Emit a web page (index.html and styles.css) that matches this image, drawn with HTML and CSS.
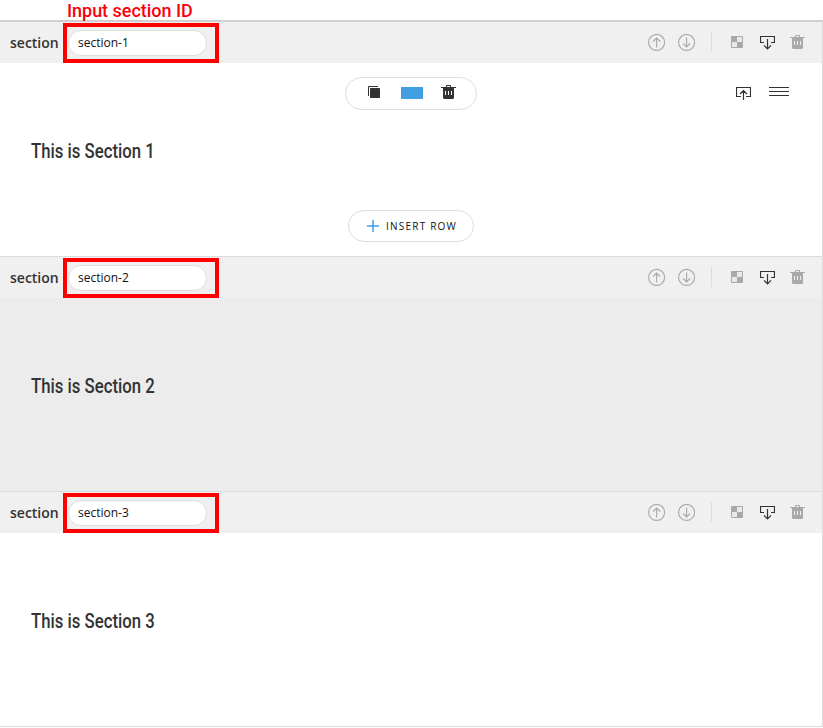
FILE: index.html
```html
<!DOCTYPE html>
<html lang="en">
<head>
<meta charset="utf-8">
<title>Section ID</title>
<link rel="stylesheet" href="styles.css">
</head>
<body>
<svg class="defs" width="0" height="0">
  <symbol id="up" viewBox="0 0 18 18"><g fill="none" stroke="currentColor" stroke-width="1.1"><circle cx="8.6" cy="9.4" r="8"/><path d="M8.6 14.5V5M5.1 8.5L8.6 5L12.1 8.5"/></g></symbol>
  <symbol id="down" viewBox="0 0 18 18"><g fill="none" stroke="currentColor" stroke-width="1.1"><circle cx="8.6" cy="9.4" r="8"/><path d="M8.6 4.5V14M5.1 10.5L8.6 14L12.1 10.5"/></g></symbol>
  <symbol id="checker" viewBox="0 0 12 12"><rect width="12" height="12" rx="1" fill="#a9a9a9"/><path d="M6 1H11V6H6ZM1 6H6V11H1Z" fill="#e9e9e9"/></symbol>
  <symbol id="insert" viewBox="0 0 15 14"><path d="M4 6.5H.5V.5H14.5V6.5H11M7.5 3V12.8M4 9.3L7.5 12.8L11 9.3" fill="none" stroke="currentColor" stroke-width="1.2"/></symbol>
  <symbol id="trash" viewBox="0 0 15 14"><path fill="currentColor" fill-rule="evenodd" d="M5 2V.8Q5 0 5.8 0H9.2Q10 0 10 .8V2H15V3H13V12.5Q13 14 11.5 14H3.5Q2 14 2 12.5V3H0V2ZM6 1V2H9V1ZM4 6V10H5V6ZM7 6V10H8V6ZM10 6V10H11V6Z"/></symbol>
  <symbol id="copy" viewBox="0 0 12 12"><path d="M.5 10V.5H10" fill="none" stroke="currentColor"/><rect x="2" y="2" width="10" height="10" rx=".8" fill="currentColor"/></symbol>
</svg>
<main class="page">
  <div class="note"><span>Input section ID</span></div>

  <section class="section first">
    <header class="bar">
      <span class="label">section</span>
      <div class="mark"><div class="field">section-1</div></div>
      <div class="tools">
        <svg class="arrow"><use href="#up"/></svg><svg class="arrow"><use href="#down"/></svg>
        <i class="divider"></i>
        <svg class="checker"><use href="#checker"/></svg><svg class="insert"><use href="#insert"/></svg><svg class="trash"><use href="#trash"/></svg>
      </div>
    </header>
    <div class="body">
      <div class="row-tools">
        <div class="pill">
          <svg class="copy"><use href="#copy"/></svg>
          <i class="swatch"></i>
          <svg class="trash"><use href="#trash"/></svg>
        </div>
        <div class="row-menu">
          <svg class="export" viewBox="0 0 15 14"><path d="M5 9.5H.5V.5H14.5V9.5H10M7.5 13V3.5M4 7L7.5 3.5L11 7" fill="none" stroke="currentColor" stroke-width="1.2"/></svg>
          <svg class="lines" viewBox="0 0 20 9"><path d="M0 .5H20M0 4.5H20M0 8.5H20" stroke="currentColor"/></svg>
        </div>
      </div>
      <h2 class="title">This is Section 1</h2>
      <div class="insert-row"><svg viewBox="0 0 12 12"><path d="M6 0V12M0 6H12" stroke="#419ee0" stroke-width="1.5"/></svg><span>INSERT ROW</span></div>
    </div>
  </section>

  <section class="section shaded">
    <header class="bar">
      <span class="label">section</span>
      <div class="mark"><div class="field">section-2</div></div>
      <div class="tools">
        <svg class="arrow"><use href="#up"/></svg><svg class="arrow"><use href="#down"/></svg>
        <i class="divider"></i>
        <svg class="checker"><use href="#checker"/></svg><svg class="insert"><use href="#insert"/></svg><svg class="trash"><use href="#trash"/></svg>
      </div>
    </header>
    <div class="body"><h2 class="title">This is Section 2</h2></div>
  </section>

  <section class="section">
    <header class="bar">
      <span class="label">section</span>
      <div class="mark"><div class="field">section-3</div></div>
      <div class="tools">
        <svg class="arrow"><use href="#up"/></svg><svg class="arrow"><use href="#down"/></svg>
        <i class="divider"></i>
        <svg class="checker"><use href="#checker"/></svg><svg class="insert"><use href="#insert"/></svg><svg class="trash"><use href="#trash"/></svg>
      </div>
    </header>
    <div class="body"><h2 class="title">This is Section 3</h2></div>
  </section>
  <div class="end"></div>
</main>
</body>
</html>
```
FILE: styles.css
```css
* { box-sizing: border-box; }
body { margin: 0; background: #fff; color: #333; font-family: "Open Sans", sans-serif; }
svg { display: block; flex: none; }
.defs { position: absolute; }
.page { width: 823px; height: 728px; overflow: hidden; }
.note { height: 20px; padding-left: 67px; font: 500 18px/22px Roboto, sans-serif; letter-spacing: -.03px; color: #fb0007; white-space: nowrap; }
.section { height: 235px; border-top: 1px solid #dcdcdc; border-right: 1px solid #dcdcdc; }
.section.first { height: 236px; border-top: 2px solid #d0d0d0; }
.bar { display: flex; height: 41px; padding-left: 10px; background: #f0f0f0; }
.label { width: 53px; font-size: 14px; font-weight: 600; line-height: 41px; }
.mark { width: 156px; height: 40px; margin-top: 1px; padding: 3px 0 0 1px; border: 4px solid #fe0000; }
.field { width: 139px; height: 26px; padding-left: 9px; border: 1px solid #dedede; border-radius: 13px; background: #fff; color: #111; font-size: 12px; line-height: 23px; }
.tools { display: flex; align-items: center; margin-left: auto; padding-right: 17px; height: 40px; color: #a9a9a9; }
.arrow { width: 18px; height: 18px; margin-right: 12px; }
.divider { width: 1px; height: 20px; margin: 0 19px 0 3px; background: #dcdcdc; }
.checker { width: 12px; height: 12px; }
.insert { width: 15px; height: 14px; margin: 2px 15px 0 17px; color: #333; }
.trash { width: 15px; height: 14px; }
.body { display: flow-root; height: 193px; }
.shaded .body { background: #ececec; }
.title { width: max-content; margin: 76px 0 0 31px; font: 500 20px/24px Roboto, sans-serif; white-space: nowrap; transform: translateY(.4px) scaleX(.837); transform-origin: left; }
.row-tools { display: grid; grid-template-columns: 345px 132px 1fr; height: 47px; padding-top: 14px; }
.pill { grid-column: 2; display: flex; height: 33px; padding: 8px 0 0 22px; border: 1px solid #dedede; border-radius: 17px; }
.copy { width: 12px; height: 12px; }
.swatch { width: 22px; height: 12px; margin: 1px 18px 0 21px; background: #419ee0; }
.pill .trash { margin-top: -1px; }
.row-menu { display: flex; padding: 10px 0 0 259px; }
.export { width: 15px; height: 14px; }
.lines { width: 20px; height: 9px; margin-left: 18px; }
.first .title { margin-top: 29px; }
.insert-row { display: flex; align-items: center; width: 126px; height: 32px; margin: 47px 0 0 348px; padding-left: 18px; border: 1px solid #dedede; border-radius: 16px; color: #111; font-size: 10px; font-weight: 500; letter-spacing: 1.22px; white-space: nowrap; }
.insert-row svg { width: 12px; height: 12px; margin-right: 7px; }
.end { height: 1px; background: #dcdcdc; }
```
